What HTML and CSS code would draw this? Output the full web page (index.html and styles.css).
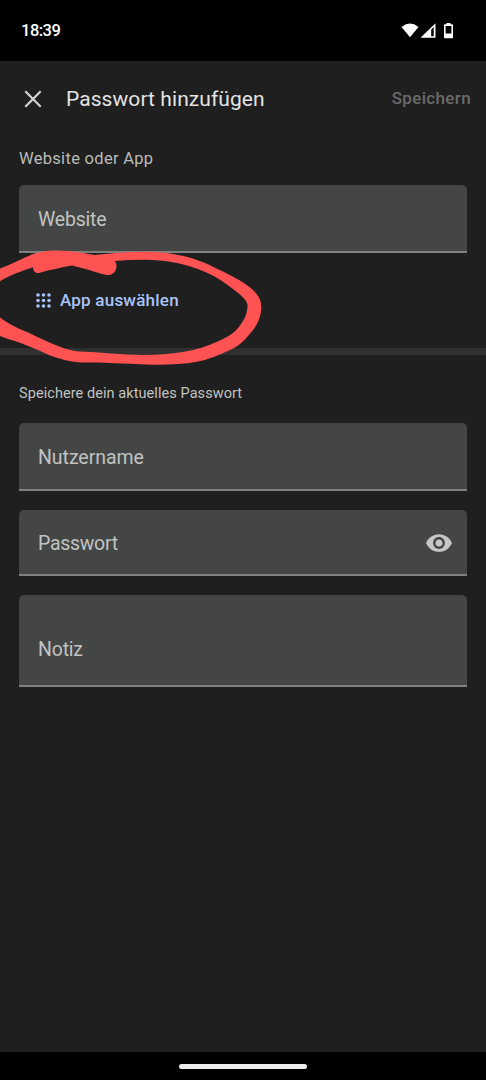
FILE: index.html
```html
<!DOCTYPE html>
<html lang="de">
<head>
<meta charset="utf-8">
<title>Passwort hinzufügen</title>
<link rel="stylesheet" href="styles.css">
</head>
<body>
<div class="screen">
  <div class="status">
    <span class="time">18:39</span>
    <svg class="status-icons" viewBox="0 0 54 18" width="54" height="18">
      <path d="M.5 5Q9 -1.8 17.5 5L9 15.300Z" fill="#fff"/>
      <path d="M19.500 15.800L34.500 1.200V15.800Z" fill="#fff"/>
      <path d="M30.200 7.400L32.700 5V14.300H30.200Z" fill="#000"/>
      <path d="M45.500 1H49.500V2.300H51.200Q52 2.300 52 3.100V15.400Q52 16.200 51.200 16.200H43.800Q43 16.200 43 15.400V3.100Q43 2.300 43.800 2.300H45.500Z" fill="#fff"/>
      <path d="M44.600 4H50.400V11.500H44.600Z" fill="#000"/>
    </svg>
  </div>
  <header class="bar">
    <svg class="close" viewBox="0 0 18 18" width="18" height="18"><path d="M1.300 1.300L16.700 16.700M16.700 1.300L1.300 16.700"/></svg>
    <h1 class="title">Passwort hinzufügen</h1>
    <span class="save">Speichern</span>
  </header>
  <main class="content">
    <section class="site">
      <p class="label">Website oder App</p>
      <div class="field"><span class="hint website">Website</span></div>
      <div class="choose">
        <svg viewBox="0 0 15 15" width="15" height="15" fill="#a9c4fb">
          <circle cx="2" cy="2" r="1.800"/><circle cx="7.500" cy="2" r="1.800"/><circle cx="13" cy="2" r="1.800"/>
          <circle cx="2" cy="7.500" r="1.800"/><circle cx="7.500" cy="7.500" r="1.800"/><circle cx="13" cy="7.500" r="1.800"/>
          <circle cx="2" cy="13" r="1.800"/><circle cx="7.500" cy="13" r="1.800"/><circle cx="13" cy="13" r="1.800"/>
        </svg>
        <span class="choose-text">App auswählen</span>
      </div>
    </section>
    <div class="divider"></div>
    <section class="account">
      <p class="caption">Speichere dein aktuelles Passwort</p>
      <div class="field"><span class="hint user">Nutzername</span></div>
      <div class="field password">
        <span class="hint pass">Passwort</span>
        <svg class="eye" viewBox="1 4.500 22 15" width="26" height="18"><path fill="#c4c7c5" d="M12 4.500C7 4.500 2.730 7.610 1 12c1.730 4.390 6 7.500 11 7.500s9.270-3.110 11-7.500c-1.730-4.390-6-7.500-11-7.500zM12 17c-2.760 0-5-2.240-5-5s2.240-5 5-5 5 2.240 5 5-2.240 5-5 5zm0-8c-1.660 0-3 1.340-3 3s1.340 3 3 3 3-1.340 3-3-1.340-3-3-3z"/></svg>
      </div>
      <div class="field note"><span class="hint notiz">Notiz</span></div>
    </section>
  </main>
  <div class="nav"><div class="handle"></div></div>
  <svg class="marker" viewBox="0 240 280 130" width="280" height="130">
    <path fill="#ff5252" d="M0 268.500C13 264 23 258 35 253.300C43 251 50 250.500 58 250.500C71 250.500 83 253 95 255C111 253 127 251.700 143 251.700C154 251.700 163 252 173 254C187 256.500 200 260 213 266.700C228 274 242 280 253 290C259 296 261.500 301 261.300 308C261 317 257 326 251 332.500C244 341 239 346 230 350C219 355 209 359.500 197 361.700C181 364.500 164 365 147 364.500C129 363.500 100 362.500 83 362.500C70 362 60 359 50 355.500C40 350.500 30 346.500 20 342.700C13 340.500 6 338.500 0 336V317.300C8 324 17 328 27 332C38 337 49 343 60 346.700C66 349 73 351 80 351.500C101 352 122 355 143 355C157 355 170 354 183 352C195 350 207 346.500 217 341.700C226 338 233 334 238 328C242 323 246 317 246.700 311.700C247.500 308 248 306 247 303C244 297 238 293 233 289C225 283 217 277 207 272.700C195 267.500 183 263.500 170 261.700C151 259 133 259.500 115 261C117 264 117 268 115 271.500C112 275 108 276 103 274.300C93 271 82 268 72 265.500C61 267.500 49 270 39 273C35 273.500 33 271 33 267.300C22 271 10 275 0 281.300Z"/>
  </svg>
</div>
</body>
</html>
```
FILE: styles.css
```css
* { box-sizing: border-box; }
body { margin: 0; background: #000; font-family: Roboto, "Liberation Sans", sans-serif; }
h1, p { margin: 0; font-weight: 400; }
svg { display: block; flex: none; }
.screen { position: relative; display: flex; flex-direction: column; width: 486px; height: 1080px; background: #1f1f1f; overflow: hidden; white-space: nowrap; }
.status { display: flex; align-items: center; justify-content: space-between; height: 61px; padding: 0 31px 0 21px; background: #000; }
.time { color: #fff; font-size: 16.500px; font-weight: 500; letter-spacing: -.5px; }
.bar { display: flex; align-items: center; height: 75px; padding: 0 15px 0 24px; }
.close { stroke: #d3d3d3; stroke-width: 2.200; fill: none; }
.title { margin-left: 24px; color: #e3e3e3; font-size: 21px; line-height: 28px; letter-spacing: .07px; }
.save { margin-left: auto; padding-bottom: 1px; color: #6a6a6a; font-size: 17px; font-weight: 500; letter-spacing: .35px; }
.content { flex: 1; }
.site { height: 212px; padding: 12px 19px 0; }
.label { height: 37px; color: #b9bcba; font-size: 16.500px; line-height: 21px; letter-spacing: .3px; }
.field { display: flex; align-items: center; height: 68px; padding: 2px 15px 0 19px; border-radius: 5px 5px 0 0; border-bottom: 2px solid #7e817f; background: #444645; }
.hint { color: #c0c3c1; font-size: 19.500px; letter-spacing: -.2px; }
.user { letter-spacing: -.05px; }
.pass { letter-spacing: -.3px; }
.choose { display: flex; align-items: center; gap: 9px; height: 94px; padding-left: 17px; color: #a9c4fb; }
.choose-text { font-size: 17px; font-weight: 500; letter-spacing: .22px; }
.divider { height: 7px; background: #303030; }
.account { display: flex; flex-direction: column; padding: 28px 19px 0; }
.caption { height: 40px; color: #c0c3c1; font-size: 14.500px; line-height: 22px; letter-spacing: .07px; }
.password { height: 66px; margin-top: 19px; }
.eye { margin-left: auto; }
.note { height: 92px; margin-top: 19px; padding-top: 18px; }
.nav { display: flex; align-items: center; justify-content: center; height: 28px; background: #000; }
.handle { width: 128px; height: 5px; border-radius: 3px; background: #ececec; }
.marker { position: absolute; left: 0; top: 240px; }
```
